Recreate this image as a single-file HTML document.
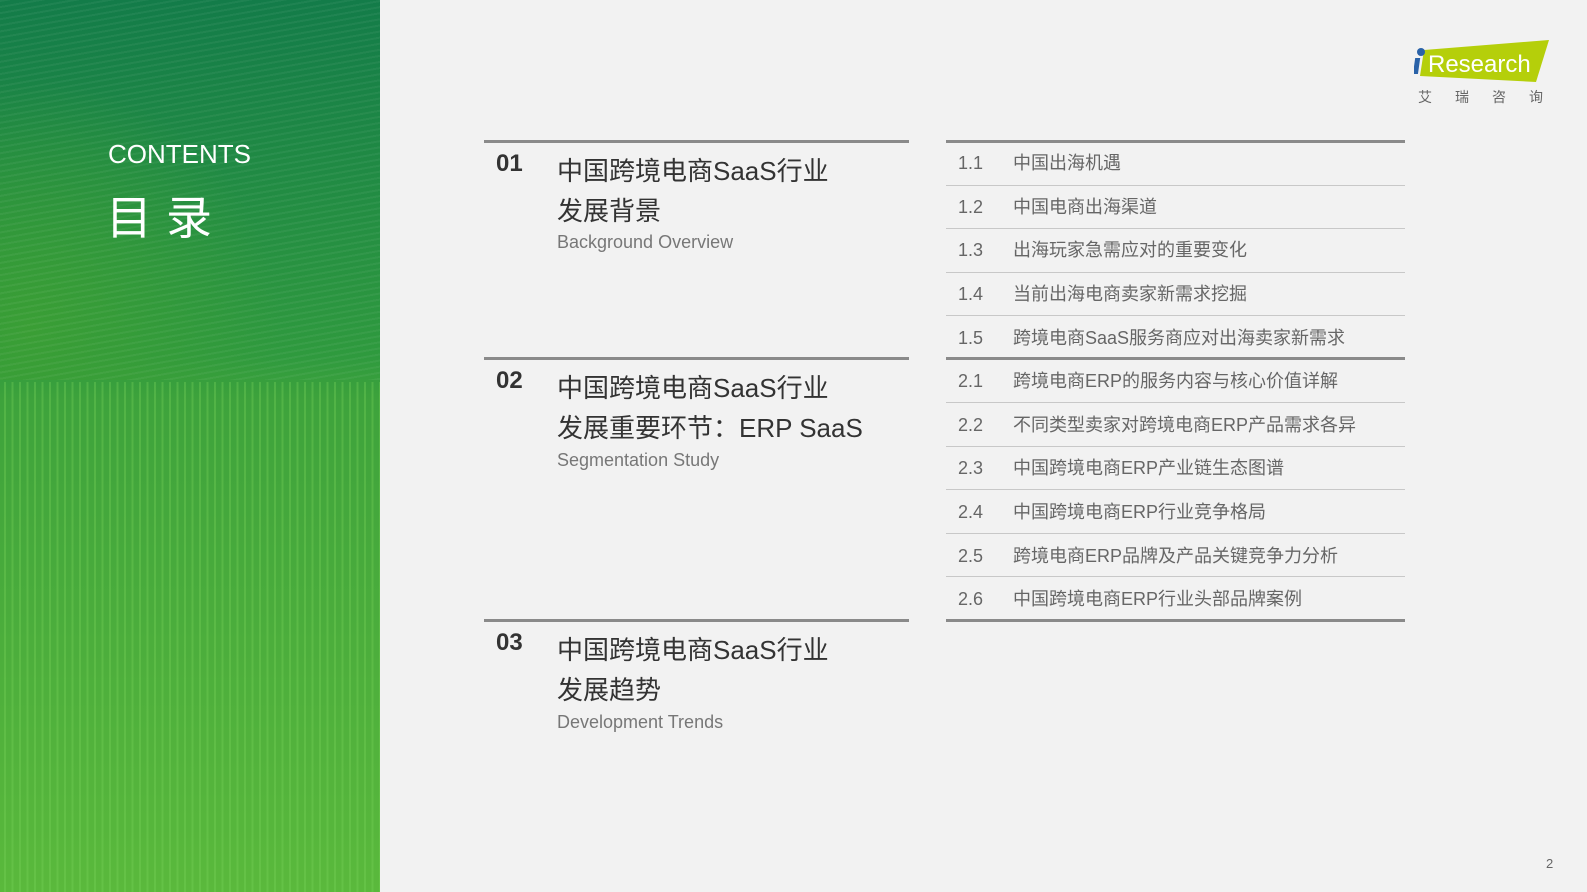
<!DOCTYPE html>
<html><head><meta charset="utf-8"><style>
*{margin:0;padding:0;box-sizing:border-box}
body{width:1587px;height:892px;background:#f2f2f2;position:relative;overflow:hidden;font-family:"Liberation Sans","Noto Sans CJK SC",sans-serif}
.panel{position:absolute;left:0;top:0;width:380px;height:892px;background:linear-gradient(180deg,#137c49 0%,#2f9a3e 40%,#3ea33c 45%,#5ab93c 100%);overflow:hidden}
.top{position:absolute;left:0;top:0;width:380px;height:380px;background:repeating-linear-gradient(170deg,rgba(255,255,255,0.05) 0 2px,transparent 2px 6px),radial-gradient(circle at 30px 330px,#3a9e35 0,transparent 250px)}
.bot{position:absolute;left:0;top:382px;width:380px;height:510px;background:repeating-linear-gradient(90deg,transparent 0 4px,rgba(120,210,90,0.35) 4px 6px,transparent 6px 7.5px)}
.abs{position:absolute;white-space:nowrap}
.line{position:absolute;height:3px;background:#8a8a8a}
.thin{position:absolute;height:1px;background:#c8c8c8;left:946px;width:459px}
.num{font-size:24px;font-weight:bold;color:#333}
.t{font-size:26px;color:#333}
.s{font-size:18px;color:#777}
.rn{position:absolute;left:958px;font-size:18px;color:#666;line-height:26px}
.rt{position:absolute;left:1013px;font-size:18px;color:#666;line-height:26px}
</style></head><body>
<div class="panel"><div class="top"></div><div class="bot"></div></div>
<div class="abs" style="left:108px;top:139px;font-size:26px;color:#fff">CONTENTS</div>
<div class="abs" style="left:106px;top:182px;font-size:46px;color:#fff;letter-spacing:14px;font-family:'Noto Sans CJK SC',sans-serif">目录</div>

<div class="line" style="left:484px;top:140px;width:425px"></div>
<div class="abs num" style="left:496px;top:150px">01</div>
<div class="abs t" style="left:557px;top:151px">中国跨境电商SaaS行业</div>
<div class="abs t" style="left:557px;top:191px">发展背景</div>
<div class="abs s" style="left:557px;top:232px">Background Overview</div>

<div class="line" style="left:484px;top:357px;width:425px"></div>
<div class="abs num" style="left:496px;top:367px">02</div>
<div class="abs t" style="left:557px;top:368px">中国跨境电商SaaS行业</div>
<div class="abs t" style="left:557px;top:408px">发展重要环节：ERP SaaS</div>
<div class="abs s" style="left:557px;top:450px">Segmentation Study</div>

<div class="line" style="left:484px;top:619px;width:425px"></div>
<div class="abs num" style="left:496px;top:629px">03</div>
<div class="abs t" style="left:557px;top:630px">中国跨境电商SaaS行业</div>
<div class="abs t" style="left:557px;top:670px">发展趋势</div>
<div class="abs s" style="left:557px;top:712px">Development Trends</div>

<div class="line" style="left:946px;top:140px;width:459px"></div>
<div class="thin" style="top:185px"></div>
<div class="thin" style="top:228px"></div>
<div class="thin" style="top:272px"></div>
<div class="thin" style="top:315px"></div>
<div class="line" style="left:946px;top:357px;width:459px"></div>
<div class="thin" style="top:402px"></div>
<div class="thin" style="top:446px"></div>
<div class="thin" style="top:489px"></div>
<div class="thin" style="top:533px"></div>
<div class="thin" style="top:576px"></div>
<div class="line" style="left:946px;top:619px;width:459px"></div>

<div class="rn" style="top:150px">1.1</div><div class="rt" style="top:150px">中国出海机遇</div>
<div class="rn" style="top:194px">1.2</div><div class="rt" style="top:194px">中国电商出海渠道</div>
<div class="rn" style="top:237px">1.3</div><div class="rt" style="top:237px">出海玩家急需应对的重要变化</div>
<div class="rn" style="top:281px">1.4</div><div class="rt" style="top:281px">当前出海电商卖家新需求挖掘</div>
<div class="rn" style="top:325px">1.5</div><div class="rt" style="top:325px">跨境电商SaaS服务商应对出海卖家新需求</div>
<div class="rn" style="top:368px">2.1</div><div class="rt" style="top:368px">跨境电商ERP的服务内容与核心价值详解</div>
<div class="rn" style="top:412px">2.2</div><div class="rt" style="top:412px">不同类型卖家对跨境电商ERP产品需求各异</div>
<div class="rn" style="top:455px">2.3</div><div class="rt" style="top:455px">中国跨境电商ERP产业链生态图谱</div>
<div class="rn" style="top:499px">2.4</div><div class="rt" style="top:499px">中国跨境电商ERP行业竞争格局</div>
<div class="rn" style="top:543px">2.5</div><div class="rt" style="top:543px">跨境电商ERP品牌及产品关键竞争力分析</div>
<div class="rn" style="top:586px">2.6</div><div class="rt" style="top:586px">中国跨境电商ERP行业头部品牌案例</div>

<svg class="abs" style="left:1414px;top:38px" width="135" height="50"><polygon points="10,12 135,2 122,44 6,38" fill="#b5cf0a"/><circle cx="7" cy="14" r="4" fill="#2a62a8"/><rect x="4" y="20" width="5" height="16" fill="#2a62a8" transform="skewX(-8)"/><text x="14" y="34" font-family="Liberation Sans,sans-serif" font-size="24" fill="#fff">Research</text></svg>
<div class="abs" style="left:1418px;top:87px;font-size:14px;color:#666;letter-spacing:23px">艾瑞咨询</div>
<div class="abs" style="left:1546px;top:856px;font-size:13px;color:#666">2</div>
</body></html>
